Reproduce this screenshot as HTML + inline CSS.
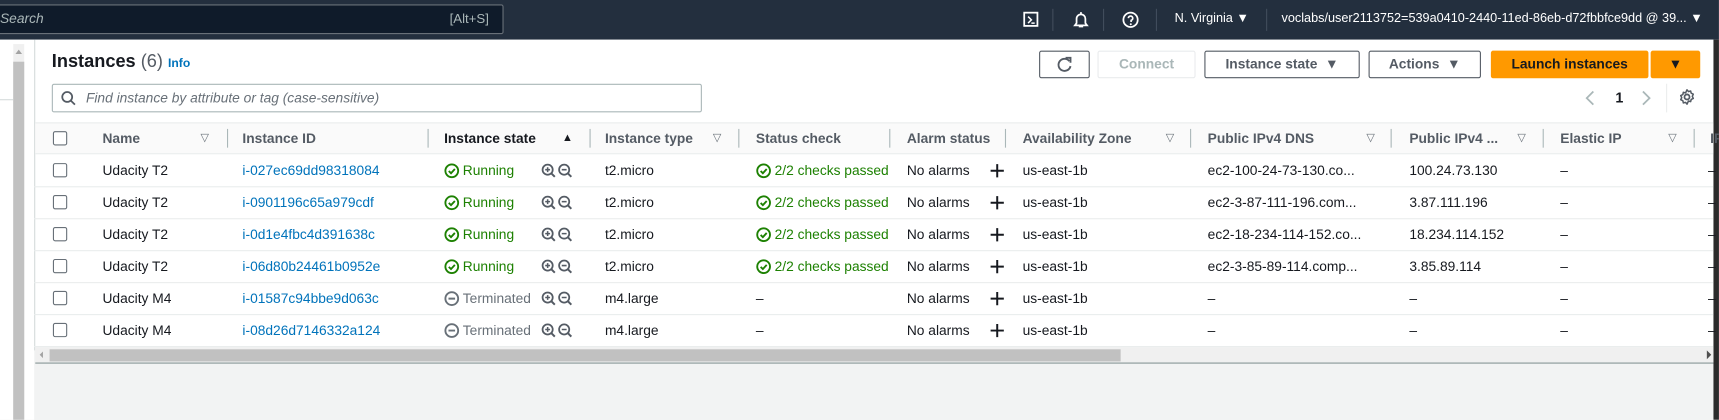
<!DOCTYPE html>
<html><head><meta charset="utf-8"><style>
*{margin:0;padding:0;box-sizing:border-box}
html,body{width:1719px;height:420px;overflow:hidden;background:#f2f3f3}
#w{position:absolute;left:0;top:0;width:1560px;height:381px;transform:scale(1.1019);transform-origin:0 0;font-family:"Liberation Sans",sans-serif;font-size:12.5px;color:#16191f;background:#f2f3f3;overflow:hidden}
.a{position:absolute;white-space:nowrap}
.nav{left:0;top:0;width:1560px;height:36px;background:#232f3e}
.sb{left:-5px;top:4px;width:462px;height:27px;background:#0f1b2a;border:1px solid #687078;border-radius:2px}
.nt{color:#fff;font-size:11.5px;top:11px}
.sep{top:8px;width:1px;height:20px;background:#414d5c}
.btn{top:46px;height:25px;border:1px solid #545b64;border-radius:2px;background:#fff;font-weight:bold;color:#545b64;text-align:center;line-height:23px;font-size:12.5px}
.h{top:119px;color:#545b64;font-weight:bold;font-size:12.5px}
.vs{top:117px;width:1px;height:17px;background:#aab7b8}
.cb{width:13px;height:13px;border:1px solid #687078;border-radius:2px;background:#fff}
.rl{left:31px;width:1524px;height:1px;background:#eaeded}
.lk{color:#0073bb}
.g{color:#1d8102}
.gr{color:#687078}
.ft{color:#687078;font-size:10px}
svg.i{vertical-align:-3px;margin-right:3px}
</style></head><body><div id="w">
<svg width="0" height="0" style="position:absolute"><defs>
<g id="ok"><circle cx="7" cy="7" r="5.8" fill="none" stroke="#1d8102" stroke-width="1.7"/><path d="M4.3 7.2l2 2 3.5-3.8" fill="none" stroke="#1d8102" stroke-width="1.7"/></g>
<g id="tm"><circle cx="7" cy="7" r="5.8" fill="none" stroke="#687078" stroke-width="1.7"/><path d="M4 7h6" stroke="#687078" stroke-width="1.8"/></g>
<g id="zz"><circle cx="6" cy="6" r="4.6" fill="none" stroke="#545b64" stroke-width="1.6"/><path d="M9.5 9.5l3 3" stroke="#545b64" stroke-width="1.8"/><path d="M3.8 6h4.4M6 3.8v4.4" stroke="#545b64" stroke-width="1.4"/>
<circle cx="21" cy="6" r="4.6" fill="none" stroke="#545b64" stroke-width="1.6"/><path d="M24.5 9.5l3 3" stroke="#545b64" stroke-width="1.8"/><path d="M18.8 6h4.4" stroke="#545b64" stroke-width="1.4"/></g>
<g id="pl"><path d="M7 1v12M1 7h12" stroke="#16191f" stroke-width="1.8"/></g>
</defs></svg>
<div class="a nav"></div>
<div class="a sb"></div>
<div class="a" style="left:0;top:10px;color:#aab7b8;font-style:italic">Search</div>
<div class="a" style="left:408px;top:10px;color:#aab7b8;font-size:12px">[Alt+S]</div>
<svg class="a" style="left:928px;top:10px" width="16" height="16"><rect x="1.5" y="1.5" width="12" height="12" fill="none" stroke="#fff" stroke-width="1.6"/><path d="M5 5l3 3-3 3M8 11h3" stroke="#fff" fill="none" stroke-width="1.4"/></svg>
<div class="a sep" style="left:955px"></div>
<svg class="a" style="left:973px;top:9px" width="16" height="18"><path d="M8 2v2M4 12V8a4 4 0 0 1 8 0v4l1.5 2h-11z" stroke="#fff" fill="none" stroke-width="1.6"/><path d="M6 15h4" stroke="#fff" stroke-width="1.6"/></svg>
<div class="a sep" style="left:1001px"></div>
<svg class="a" style="left:1018px;top:10px" width="16" height="16"><circle cx="8" cy="8" r="6.5" stroke="#fff" fill="none" stroke-width="1.6"/><path d="M6 6.5a2 2 0 1 1 2.5 2V10" stroke="#fff" fill="none" stroke-width="1.5"/><circle cx="8.2" cy="12" r="0.9" fill="#fff"/></svg>
<div class="a sep" style="left:1049px"></div>
<div class="a nt" style="left:1066px">N. Virginia ▼</div>
<div class="a sep" style="left:1149px"></div>
<div class="a nt" style="left:1163px">voclabs/user2113752=539a0410-2440-11ed-86eb-d72fbbfce9dd @ 39... ▼</div>
<div class="a" style="left:0;top:36px;width:31px;height:345px;background:#fff"></div>
<div class="a" style="left:0;top:90px;width:12px;height:1px;background:#d5dbdb"></div>
<div class="a" style="left:12px;top:40px;width:10px;height:341px;background:#f0f0f0"></div>
<div class="a" style="left:12px;top:56px;width:10px;height:325px;background:#c1c1c1"></div>
<div class="a" style="left:14px;top:45px;width:0;height:0;border-left:3px solid transparent;border-right:3px solid transparent;border-bottom:4px solid #a3a3a3"></div>
<div class="a" style="left:31px;top:36px;width:1524px;height:282px;background:#fff;border-left:1px solid #d5dbdb"></div>
<div class="a" style="left:1555px;top:36px;width:5px;height:345px;background:#2b2b2b"></div>
<div class="a" style="left:47px;top:47px;font-size:16.5px;font-weight:bold">Instances <span style="font-weight:normal;color:#545b64">(6)</span> <span style="font-size:11px;color:#0073bb">Info</span></div>
<div class="a btn" style="left:943px;width:46px"></div>
<svg class="a" style="left:958px;top:51px" width="16" height="16"><path d="M12.5 4.5A5.5 5.5 0 1 0 13.5 9" stroke="#545b64" fill="none" stroke-width="1.7"/><path d="M9 1.5h4.5V6" stroke="#545b64" fill="none" stroke-width="1.7"/></svg>
<div class="a btn" style="left:996px;width:89px;border-color:#e9ebed;color:#aab7b8">Connect</div>
<div class="a btn" style="left:1093px;width:141px">Instance state &nbsp;▼</div>
<div class="a btn" style="left:1242px;width:102px">Actions &nbsp;▼</div>
<div class="a btn" style="left:1353px;width:143px;background:#ff9900;border-color:#ff9900;color:#16191f">Launch instances</div>
<div class="a btn" style="left:1498px;width:45px;background:#ff9900;border-color:#ff9900;color:#16191f">▼</div>
<div class="a" style="left:47px;top:76px;width:590px;height:26px;border:1px solid #aab7b8;border-radius:2px"></div>
<svg class="a" style="left:55px;top:82px" width="14" height="14"><circle cx="6" cy="6" r="4.5" stroke="#545b64" fill="none" stroke-width="1.6"/><path d="M9.5 9.5l3.5 3.5" stroke="#545b64" stroke-width="1.6"/></svg>
<div class="a" style="left:78px;top:82px;font-style:italic;color:#687078;font-size:12.5px">Find instance by attribute or tag (case-sensitive)</div>
<svg class="a" style="left:1437px;top:81px" width="12" height="16"><path d="M9 2L3 8l6 6" stroke="#aab7b8" fill="none" stroke-width="1.6"/></svg>
<div class="a" style="left:1466px;top:81px;font-weight:bold;font-size:13px">1</div>
<svg class="a" style="left:1488px;top:81px" width="12" height="16"><path d="M3 2l6 6-6 6" stroke="#aab7b8" fill="none" stroke-width="1.6"/></svg>
<div class="a" style="left:1512px;top:76px;width:1px;height:26px;background:#eaeded"></div>
<svg class="a" style="left:1523px;top:80px" width="16" height="16"><circle cx="8" cy="8" r="2.3" stroke="#545b64" fill="none" stroke-width="1.6"/><path d="M8 1.5l1.3 1.6 2-.5.5 2 1.9.9-.9 1.9.9 1.9-1.9.9-.5 2-2-.5L8 14.5l-1.3-1.6-2 .5-.5-2-1.9-.9.9-1.9-.9-1.9 1.9-.9.5-2 2 .5z" stroke="#545b64" fill="none" stroke-width="1.4" stroke-linejoin="round"/></svg>
<div class="a" style="left:32px;top:111px;width:1523px;height:29px;background:#fafafa;border-top:1px solid #eaeded;border-bottom:1px solid #eaeded"></div>
<div class="a cb" style="left:48px;top:119px"></div>
<div class="a h" style="left:93px">Name</div><div class="a ft" style="left:182px;top:120px">▽</div><div class="a vs" style="left:206px"></div>
<div class="a h" style="left:220px">Instance ID</div><div class="a vs" style="left:388px"></div>
<div class="a h" style="left:403px;color:#16191f">Instance state</div><div class="a" style="left:510px;top:120px;font-size:10px">▲</div><div class="a vs" style="left:535px"></div>
<div class="a h" style="left:549px">Instance type</div><div class="a ft" style="left:647px;top:120px">▽</div><div class="a vs" style="left:670px"></div>
<div class="a h" style="left:686px">Status check</div><div class="a vs" style="left:807px"></div>
<div class="a h" style="left:823px">Alarm status</div><div class="a vs" style="left:912px"></div>
<div class="a h" style="left:928px">Availability Zone</div><div class="a ft" style="left:1058px;top:120px">▽</div><div class="a vs" style="left:1080px"></div>
<div class="a h" style="left:1096px">Public IPv4 DNS</div><div class="a ft" style="left:1240px;top:120px">▽</div><div class="a vs" style="left:1262px"></div>
<div class="a h" style="left:1279px">Public IPv4 ...</div><div class="a ft" style="left:1377px;top:120px">▽</div><div class="a vs" style="left:1400px"></div>
<div class="a h" style="left:1416px">Elastic IP</div><div class="a ft" style="left:1514px;top:120px">▽</div><div class="a vs" style="left:1537px"></div>
<div class="a h" style="left:1552px">IP</div>
<div class="a" style="left:32px;top:315px;width:1523px;height:14px;background:#f0f0f0"></div>
<div class="a" style="left:45px;top:317px;width:972px;height:11px;background:#c1c1c1"></div>
<div class="a" style="left:36px;top:319px;width:0;height:0;border-top:3px solid transparent;border-bottom:3px solid transparent;border-right:3px solid #a3a3a3"></div>
<div class="a" style="left:1549px;top:318px;width:0;height:0;border-top:4px solid transparent;border-bottom:4px solid transparent;border-left:4px solid #505050"></div>
<div class="a" style="left:32px;top:329px;width:1523px;height:1px;background:#879596"></div>
<div class="a rl" style="top:169px"></div><div class="a rl" style="top:198px"></div><div class="a rl" style="top:227px"></div><div class="a rl" style="top:256px"></div><div class="a rl" style="top:285px"></div><div class="a rl" style="top:314px"></div>

<div style="position:absolute;left:0;top:140px">
<div class="a cb" style="left:48px;top:8px"></div><div class="a" style="left:93px;top:8px">Udacity T2</div><div class="a lk" style="left:220px;top:8px">i-027ec69dd98318084</div>
<div class="a g" style="left:403px;top:8px"><svg class="i" width="14" height="14"><use href="#ok"/></svg>Running</div><svg class="a" style="left:491px;top:8px" width="29" height="14"><use href="#zz"/></svg>
<div class="a" style="left:549px;top:8px">t2.micro</div><div class="a g" style="left:686px;top:8px"><svg class="i" width="14" height="14"><use href="#ok"/></svg>2/2 checks passed</div>
<div class="a" style="left:823px;top:8px">No alarms</div><svg class="a" style="left:898px;top:8px" width="14" height="14"><use href="#pl"/></svg>
<div class="a" style="left:928px;top:8px">us-east-1b</div><div class="a" style="left:1096px;top:8px">ec2-100-24-73-130.co...</div><div class="a" style="left:1279px;top:8px">100.24.73.130</div>
<div class="a" style="left:1416px;top:8px">–</div><div class="a" style="left:1550px;top:8px">–</div></div>

<div style="position:absolute;left:0;top:169px">
<div class="a cb" style="left:48px;top:8px"></div><div class="a" style="left:93px;top:8px">Udacity T2</div><div class="a lk" style="left:220px;top:8px">i-0901196c65a979cdf</div>
<div class="a g" style="left:403px;top:8px"><svg class="i" width="14" height="14"><use href="#ok"/></svg>Running</div><svg class="a" style="left:491px;top:8px" width="29" height="14"><use href="#zz"/></svg>
<div class="a" style="left:549px;top:8px">t2.micro</div><div class="a g" style="left:686px;top:8px"><svg class="i" width="14" height="14"><use href="#ok"/></svg>2/2 checks passed</div>
<div class="a" style="left:823px;top:8px">No alarms</div><svg class="a" style="left:898px;top:8px" width="14" height="14"><use href="#pl"/></svg>
<div class="a" style="left:928px;top:8px">us-east-1b</div><div class="a" style="left:1096px;top:8px">ec2-3-87-111-196.com...</div><div class="a" style="left:1279px;top:8px">3.87.111.196</div>
<div class="a" style="left:1416px;top:8px">–</div><div class="a" style="left:1550px;top:8px">–</div></div>

<div style="position:absolute;left:0;top:198px">
<div class="a cb" style="left:48px;top:8px"></div><div class="a" style="left:93px;top:8px">Udacity T2</div><div class="a lk" style="left:220px;top:8px">i-0d1e4fbc4d391638c</div>
<div class="a g" style="left:403px;top:8px"><svg class="i" width="14" height="14"><use href="#ok"/></svg>Running</div><svg class="a" style="left:491px;top:8px" width="29" height="14"><use href="#zz"/></svg>
<div class="a" style="left:549px;top:8px">t2.micro</div><div class="a g" style="left:686px;top:8px"><svg class="i" width="14" height="14"><use href="#ok"/></svg>2/2 checks passed</div>
<div class="a" style="left:823px;top:8px">No alarms</div><svg class="a" style="left:898px;top:8px" width="14" height="14"><use href="#pl"/></svg>
<div class="a" style="left:928px;top:8px">us-east-1b</div><div class="a" style="left:1096px;top:8px">ec2-18-234-114-152.co...</div><div class="a" style="left:1279px;top:8px">18.234.114.152</div>
<div class="a" style="left:1416px;top:8px">–</div><div class="a" style="left:1550px;top:8px">–</div></div>

<div style="position:absolute;left:0;top:227px">
<div class="a cb" style="left:48px;top:8px"></div><div class="a" style="left:93px;top:8px">Udacity T2</div><div class="a lk" style="left:220px;top:8px">i-06d80b24461b0952e</div>
<div class="a g" style="left:403px;top:8px"><svg class="i" width="14" height="14"><use href="#ok"/></svg>Running</div><svg class="a" style="left:491px;top:8px" width="29" height="14"><use href="#zz"/></svg>
<div class="a" style="left:549px;top:8px">t2.micro</div><div class="a g" style="left:686px;top:8px"><svg class="i" width="14" height="14"><use href="#ok"/></svg>2/2 checks passed</div>
<div class="a" style="left:823px;top:8px">No alarms</div><svg class="a" style="left:898px;top:8px" width="14" height="14"><use href="#pl"/></svg>
<div class="a" style="left:928px;top:8px">us-east-1b</div><div class="a" style="left:1096px;top:8px">ec2-3-85-89-114.comp...</div><div class="a" style="left:1279px;top:8px">3.85.89.114</div>
<div class="a" style="left:1416px;top:8px">–</div><div class="a" style="left:1550px;top:8px">–</div></div>

<div style="position:absolute;left:0;top:256px">
<div class="a cb" style="left:48px;top:8px"></div><div class="a" style="left:93px;top:8px">Udacity M4</div><div class="a lk" style="left:220px;top:8px">i-01587c94bbe9d063c</div>
<div class="a gr" style="left:403px;top:8px"><svg class="i" width="14" height="14"><use href="#tm"/></svg>Terminated</div><svg class="a" style="left:491px;top:8px" width="29" height="14"><use href="#zz"/></svg>
<div class="a" style="left:549px;top:8px">m4.large</div><div class="a" style="left:686px;top:8px">–</div>
<div class="a" style="left:823px;top:8px">No alarms</div><svg class="a" style="left:898px;top:8px" width="14" height="14"><use href="#pl"/></svg>
<div class="a" style="left:928px;top:8px">us-east-1b</div><div class="a" style="left:1096px;top:8px">–</div><div class="a" style="left:1279px;top:8px">–</div>
<div class="a" style="left:1416px;top:8px">–</div><div class="a" style="left:1550px;top:8px">–</div></div>

<div style="position:absolute;left:0;top:285px">
<div class="a cb" style="left:48px;top:8px"></div><div class="a" style="left:93px;top:8px">Udacity M4</div><div class="a lk" style="left:220px;top:8px">i-08d26d7146332a124</div>
<div class="a gr" style="left:403px;top:8px"><svg class="i" width="14" height="14"><use href="#tm"/></svg>Terminated</div><svg class="a" style="left:491px;top:8px" width="29" height="14"><use href="#zz"/></svg>
<div class="a" style="left:549px;top:8px">m4.large</div><div class="a" style="left:686px;top:8px">–</div>
<div class="a" style="left:823px;top:8px">No alarms</div><svg class="a" style="left:898px;top:8px" width="14" height="14"><use href="#pl"/></svg>
<div class="a" style="left:928px;top:8px">us-east-1b</div><div class="a" style="left:1096px;top:8px">–</div><div class="a" style="left:1279px;top:8px">–</div>
<div class="a" style="left:1416px;top:8px">–</div><div class="a" style="left:1550px;top:8px">–</div></div>
</div></body></html>
